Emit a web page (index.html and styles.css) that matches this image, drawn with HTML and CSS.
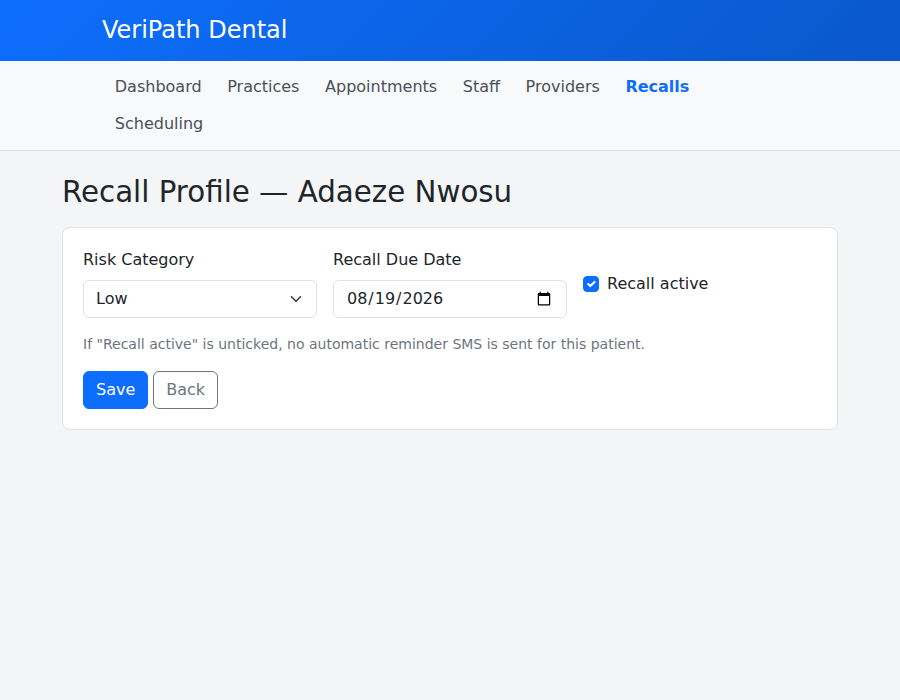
FILE: index.html
```html
<!DOCTYPE html>
<html lang="en">
<head>
<meta charset="utf-8">
<title>Recall Profile — Adaeze Nwosu</title>
<link rel="stylesheet" href="styles.css">
</head>
<body>
<header class="topbar">
  <div class="container">
    <span class="brand">VeriPath Dental</span>
  </div>
</header>
<nav class="subnav">
  <div class="container">
    <ul class="nav-list">
      <li><a class="nav-link" href="#">Dashboard</a></li>
      <li><a class="nav-link" href="#">Practices</a></li>
      <li><a class="nav-link" href="#">Appointments</a></li>
      <li><a class="nav-link" href="#">Staff</a></li>
      <li><a class="nav-link" href="#">Providers</a></li>
      <li><a class="nav-link active" href="#">Recalls</a></li>
      <li><a class="nav-link" href="#">Scheduling</a></li>
    </ul>
  </div>
</nav>
<main class="main">
  <h2 class="page-title">Recall Profile — Adaeze Nwosu</h2>
  <section class="card">
    <form class="card-body">
      <div class="form-row">
        <div class="field">
          <label class="form-label" for="risk">Risk Category</label>
          <select id="risk" class="form-select">
            <option selected>Low</option>
            <option>Medium</option>
            <option>High</option>
          </select>
        </div>
        <div class="field">
          <label class="form-label" for="due">Recall Due Date</label>
          <input id="due" class="form-control" type="date" value="2026-08-19">
        </div>
        <div class="field">
          <div class="form-check">
            <input id="active" class="form-check-input" type="checkbox" checked>
            <label class="form-check-label" for="active">Recall active</label>
          </div>
        </div>
      </div>
      <p class="help">If "Recall active" is unticked, no automatic reminder SMS is sent for this patient.</p>
      <div class="actions">
        <button type="button" class="btn btn-primary">Save</button>
        <a href="#" class="btn btn-outline">Back</a>
      </div>
    </form>
  </section>
</main>
</body>
</html>
```
FILE: styles.css
```css
* { box-sizing: border-box; }
html, body { margin: 0; padding: 0; }
body {
  font-family: "DejaVu Sans", sans-serif;
  font-size: 16px;
  line-height: 1.5;
  color: #212529;
  background: #f4f5f7;
}
.container {
  max-width: 720px;
  margin: 0 auto;
  padding: 0 12px;
}
.topbar {
  background: linear-gradient(135deg, #0d6efd 0%, #0a58ca 100%);
  height: 61px;
  display: flex;
  align-items: center;
}
.topbar .container { width: 100%; }
.brand {
  color: #fff;
  font-size: 24px;
  line-height: 1.4;
}
.subnav {
  background: #f8f9fa;
  border-bottom: 1px solid #dee2e6;
  padding: 7px 0 8px;
}
.nav-list {
  list-style: none;
  margin: 0;
  padding: 0;
  display: flex;
  flex-wrap: wrap;
}
.nav-link {
  display: block;
  padding: 6.5px 12.8px;
  color: #495057;
  text-decoration: none;
}
.nav-link.active {
  color: #0d6efd;
  font-weight: 700;
}
.main {
  max-width: 800px;
  margin: 0 auto;
  padding: 24px 12px 0;
}
.page-title {
  font-size: 29.3px;
  font-weight: 500;
  line-height: 1.2;
  margin: 0 0 17px;
}
.card {
  background: #fff;
  border: 1px solid #dee2e6;
  border-radius: 8px;
}
.card-body {
  padding: 20px;
  margin: 0;
}
.form-row {
  display: grid;
  grid-template-columns: 1fr 1fr 1fr;
  gap: 16px;
  align-items: center;
}
.form-label {
  display: block;
  margin-bottom: 8px;
}
.form-select, .form-control {
  display: block;
  width: 100%;
  height: 38px;
  padding: 6px 12px;
  font-family: inherit;
  font-size: 16px;
  line-height: 1.5;
  color: #212529;
  background-color: #fff;
  border: 1px solid #dee2e6;
  border-radius: 6px;
}
.form-select {
  appearance: none;
  -webkit-appearance: none;
  padding-right: 36px;
  background-image: url("data:image/svg+xml,%3csvg xmlns='http://www.w3.org/2000/svg' viewBox='0 0 16 16'%3e%3cpath fill='none' stroke='%23343a40' stroke-linecap='round' stroke-linejoin='round' stroke-width='2' d='m2 5 6 6 6-6'/%3e%3c/svg%3e");
  background-repeat: no-repeat;
  background-position: right 12px center;
  background-size: 16px 12px;
}
.form-check {
  display: flex;
  align-items: flex-start;
  gap: 8px;
  margin-top: 2px;
}
.form-check-input {
  appearance: none;
  -webkit-appearance: none;
  width: 16px;
  height: 16px;
  margin: 4px 0 0;
  flex: none;
  border: 1px solid #0d6efd;
  border-radius: 4px;
  background-color: #0d6efd;
  background-image: url("data:image/svg+xml,%3csvg xmlns='http://www.w3.org/2000/svg' viewBox='0 0 20 20'%3e%3cpath fill='none' stroke='%23fff' stroke-linecap='round' stroke-linejoin='round' stroke-width='3' d='m6 10 3 3 6-6'/%3e%3c/svg%3e");
  background-size: 100% 100%;
}
.help {
  margin: 16px 0 16px;
  font-size: 14px;
  line-height: 1.5;
  color: #6c757d;
}
.actions {
  display: flex;
  gap: 5px;
}
.btn {
  display: inline-block;
  height: 38px;
  padding: 6px 12px;
  font-family: inherit;
  font-size: 16px;
  line-height: 1.5;
  border-radius: 6px;
  border: 1px solid transparent;
  text-decoration: none;
  cursor: pointer;
}
.btn-primary {
  background: #0d6efd;
  border-color: #0d6efd;
  color: #fff;
}
.btn-outline {
  background: transparent;
  border-color: #6c757d;
  color: #6c757d;
}
```
